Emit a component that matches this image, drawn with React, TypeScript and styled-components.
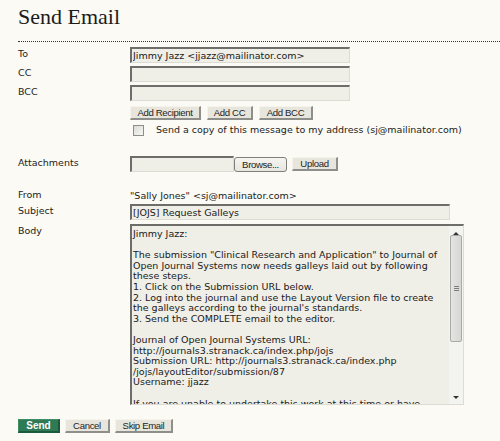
import React from "react";
import styled, { createGlobalStyle } from "styled-components";

const Global = createGlobalStyle`
  html, body { margin: 0; padding: 0; background: #fbfaf4; }
  body { width: 500px; height: 441px; overflow: hidden; }
`;

const Page = styled.div`
  padding: 4px 0 0 18px;
  font-family: "DejaVu Sans", Verdana, sans-serif;
  font-size: 9.5px;
  color: #222;
`;

const Title = styled.h1`
  margin: 0;
  font-family: "Liberation Serif", Georgia, serif;
  font-weight: normal;
  font-size: 22px;
  line-height: 26px;
  color: #1c1c1c;
`;

const Divider = styled.div`
  margin-top: 11px;
  height: 0;
  border-top: 1px dotted #333;
`;

const Row = styled.div<{ $mt: number; $h?: number }>`
  display: grid;
  grid-template-columns: 112px 1fr;
  align-items: center;
  margin-top: ${(p) => p.$mt}px;
  ${(p) => (p.$h ? `height: ${p.$h}px;` : "")}
`;

const Label = styled.div<{ $top?: boolean }>`
  align-self: ${(p) => (p.$top ? "start" : "center")};
  line-height: 12px;
  margin-top: ${(p) => (p.$top ? "1px" : "-2px")};
`;

const Inline = styled.div<{ $gap: number }>`
  display: flex;
  align-items: center;
  gap: ${(p) => p.$gap}px;
`;

const TextField = styled.input<{ $w: number }>`
  box-sizing: border-box;
  display: block;
  width: ${(p) => p.$w}px;
  height: 16px;
  margin: 0;
  padding: 0 0 0 1px;
  background: #efeee7;
  border-style: solid;
  border-width: 2px 1px 1px 2px;
  border-color: #6d6d6a #dddcd4 #dddcd4 #6d6d6a;
  font-family: "DejaVu Sans", Verdana, sans-serif;
  font-size: 9.5px;
  color: #1a1a1a;
  outline: none;
`;

const Button = styled.button<{ $w: number; $primary?: boolean; $ml?: number }>`
  box-sizing: border-box;
  width: ${(p) => p.$w}px;
  height: 14px;
  margin: 0 0 0 ${(p) => p.$ml ?? 0}px;
  padding: 0;
  font-family: "Liberation Sans", Arial, sans-serif;
  font-size: ${(p) => (p.$primary ? "10px" : "9.6px")};
  font-weight: ${(p) => (p.$primary ? "bold" : "normal")};
  line-height: 12px;
  letter-spacing: ${(p) => (p.$primary ? "0" : "-0.35px")};
  color: ${(p) => (p.$primary ? "#ffffff" : "#1e1e1e")};
  background: ${(p) => (p.$primary ? "#2d7a55" : "#e8e6dc")};
  border-style: solid;
  border-width: 1px 2px 2px 1px;
  border-color: ${(p) =>
    p.$primary
      ? "#3f8d66 #1d5a3d #1d5a3d #3f8d66"
      : "#f4f3ec #8e8e8a #8e8e8a #f4f3ec"};
  cursor: pointer;
`;

const BrowseButton = styled.button`
  box-sizing: border-box;
  width: 53px;
  height: 15px;
  margin: 0;
  padding: 0;
  font-family: "Liberation Sans", Arial, sans-serif;
  font-size: 9.6px;
  letter-spacing: -0.35px;
  color: #1e1e1e;
  background: linear-gradient(#f6f5f0, #e6e5de);
  border: 1px solid #7f7f7a;
  border-radius: 3px;
`;

const Check = styled.input`
  appearance: none;
  box-sizing: border-box;
  width: 11px;
  height: 11px;
  margin: 0 0 0 3px;
  border: 1px solid #8d8d8a;
  background: linear-gradient(135deg, #dcdcd6, #f7f7f3);
`;

const CheckText = styled.span`
  margin-left: 12px;
  line-height: 12px;
`;

const FileField = styled.div`
  box-sizing: border-box;
  width: 104px;
  height: 16px;
  background: #efeee7;
  border-style: solid;
  border-width: 2px 1px 1px 2px;
  border-color: #6d6d6a #dddcd4 #dddcd4 #6d6d6a;
`;

const Plain = styled.div`
  line-height: 12px;
`;

const BodyBox = styled.div`
  box-sizing: border-box;
  width: 334px;
  height: 181px;
  display: flex;
  background: #efeee7;
  border-style: solid;
  border-width: 2px 1px 1px 2px;
  border-color: #6d6d6a #dddcd4 #dddcd4 #6d6d6a;
  align-self: start;
`;

const BodyText = styled.div`
  flex: 1;
  overflow: hidden;
  padding: 3px 0 0 1px;
  white-space: pre;
  line-height: 10.6px;
  font-size: 9.5px;
  color: #1a1a1a;
`;

const Scrollbar = styled.div`
  width: 14px;
  display: flex;
  flex-direction: column;
  align-items: center;
  background: #f3f3ef;
`;

const Arrow = styled.div<{ $down?: boolean }>`
  height: 14px;
  width: 14px;
  display: flex;
  align-items: center;
  justify-content: center;
  &::before {
    content: "";
    width: 0;
    height: 0;
    border-left: 3px solid transparent;
    border-right: 3px solid transparent;
    ${(p) =>
      p.$down
        ? "border-top: 3px solid #333;"
        : "border-bottom: 3px solid #333;"}
  }
`;

const Thumb = styled.div`
  box-sizing: border-box;
  width: 12px;
  height: 107px;
  margin-top: -5px;
  border: 1px solid #a9a9a6;
  border-radius: 2px;
  background: linear-gradient(90deg, #e4e4e2, #d6d6d3);
  display: flex;
  align-items: center;
  justify-content: center;
`;

const Grip = styled.div`
  width: 5px;
  height: 6px;
  background: repeating-linear-gradient(
    #7d7d7a 0 1px,
    transparent 1px 2px
  );
`;

const Track = styled.div`
  flex: 1;
`;

const Actions = styled.div`
  display: flex;
  gap: 5px;
  margin-top: 14px;
`;

const bodyLines = [
  "Jimmy Jazz:",
  "",
  'The submission "Clinical Research and Application" to Journal of',
  "Open Journal Systems now needs galleys laid out by following",
  "these steps.",
  "1. Click on the Submission URL below.",
  "2. Log into the journal and use the Layout Version file to create",
  "the galleys according to the journal's standards.",
  "3. Send the COMPLETE email to the editor.",
  "",
  "Journal of Open Journal Systems URL:",
  "http://journals3.stranack.ca/index.php/jojs",
  "Submission URL: http://journals3.stranack.ca/index.php",
  "/jojs/layoutEditor/submission/87",
  "Username: jjazz",
  "",
  "If you are unable to undertake this work at this time or have",
  "any questions, please contact me.",
].join("\n");

export default function App() {
  return (
    <>
      <Global />
      <Page>
        <Title>Send Email</Title>
        <Divider />
        <Row $mt={5}>
          <Label>To</Label>
          <TextField $w={220} readOnly defaultValue="Jimmy Jazz <jjazz@mailinator.com>" />
        </Row>
        <Row $mt={3}>
          <Label>CC</Label>
          <TextField $w={220} readOnly defaultValue="" />
        </Row>
        <Row $mt={3}>
          <Label>BCC</Label>
          <TextField $w={220} readOnly defaultValue="" />
        </Row>
        <Row $mt={5}>
          <span />
          <Inline $gap={6}>
            <Button $w={71}>Add Recipient</Button>
            <Button $w={46}>Add CC</Button>
            <Button $w={54}>Add BCC</Button>
          </Inline>
        </Row>
        <Row $mt={3} $h={14}>
          <span />
          <Inline $gap={0}>
            <Check type="checkbox" />
            <CheckText>Send a copy of this message to my address (sj@mailinator.com)</CheckText>
          </Inline>
        </Row>
        <Row $mt={19}>
          <Label>Attachments</Label>
          <Inline $gap={0}>
            <FileField />
            <BrowseButton>Browse...</BrowseButton>
            <Button $w={46} $ml={5}>Upload</Button>
          </Inline>
        </Row>
        <Row $mt={18}>
          <Label>From</Label>
          <Plain>"Sally Jones" &lt;sj@mailinator.com&gt;</Plain>
        </Row>
        <Row $mt={2}>
          <Label>Subject</Label>
          <TextField $w={320} readOnly defaultValue="[JOJS] Request Galleys" />
        </Row>
        <Row $mt={4}>
          <Label $top>Body</Label>
          <BodyBox>
            <BodyText>{bodyLines}</BodyText>
            <Scrollbar>
              <Arrow />
              <Thumb>
                <Grip />
              </Thumb>
              <Track />
              <Arrow $down />
            </Scrollbar>
          </BodyBox>
        </Row>
        <Actions>
          <Button $w={42} $primary>Send</Button>
          <Button $w={45}>Cancel</Button>
          <Button $w={58}>Skip Email</Button>
        </Actions>
      </Page>
    </>
  );
}
